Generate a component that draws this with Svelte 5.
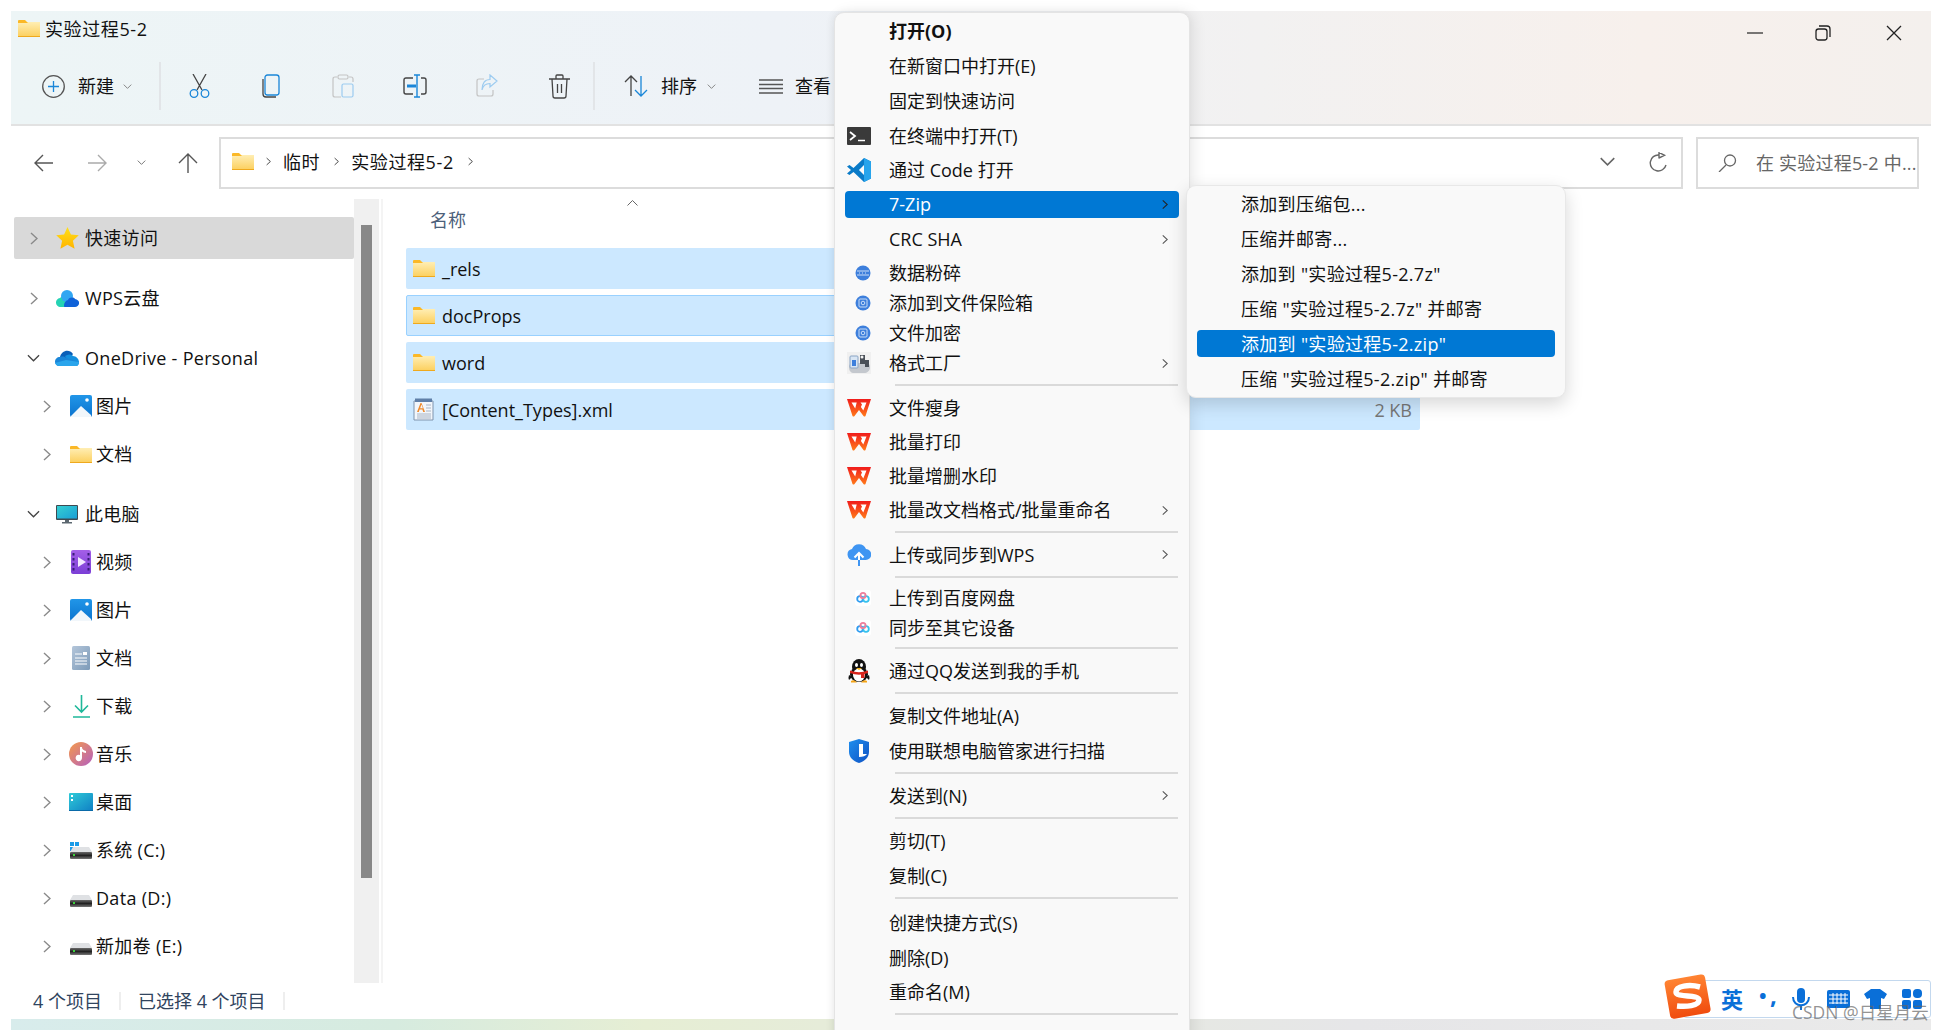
<script>
  const navTree = [
    { label: '快速访问', icon: 'star', active: true },
    { label: 'WPS云盘', icon: 'wpscloud', group: true },
    { label: 'OneDrive - Personal', icon: 'onedrive', open: true, group: true },
    { label: '图片', icon: 'pics', sub: true },
    { label: '文档', icon: 'folder', sub: true },
    { label: '此电脑', icon: 'monitor', open: true, group: true },
    { label: '视频', icon: 'video', sub: true },
    { label: '图片', icon: 'pics', sub: true },
    { label: '文档', icon: 'docs', sub: true },
    { label: '下载', icon: 'download', sub: true },
    { label: '音乐', icon: 'music', sub: true },
    { label: '桌面', icon: 'desktop', sub: true },
    { label: '系统 (C:)', icon: 'sysdrive', sub: true },
    { label: 'Data (D:)', icon: 'drive', sub: true },
    { label: '新加卷 (E:)', icon: 'drive', sub: true }
  ];

  const files = [
    { name: '_rels', icon: 'folder' },
    { name: 'docProps', icon: 'folder', focus: true },
    { name: 'word', icon: 'folder' },
    { name: '[Content_Types].xml', icon: 'xml', size: '2 KB' }
  ];

  const smallIcons = ['shred', 'vault', 'baidu'];

  const menu = [
    { t: '打开(O)', bold: true },
    { t: '在新窗口中打开(E)' },
    { t: '固定到快速访问' },
    { t: '在终端中打开(T)', icon: 'terminal' },
    { t: '通过 Code 打开', icon: 'vscode', size: 'h34' },
    { t: '7-Zip', more: true, on: true },
    { t: 'CRC SHA', more: true, size: 'crc' },
    { t: '数据粉碎', icon: 'shred', size: 'h30' },
    { t: '添加到文件保险箱', icon: 'vault', size: 'h30' },
    { t: '文件加密', icon: 'vault', size: 'h30' },
    { t: '格式工厂', icon: 'factory', more: true, size: 'h32' },
    { sep: true, extra: true },
    { t: '文件瘦身', icon: 'wps', size: 'h34' },
    { t: '批量打印', icon: 'wps', size: 'h34' },
    { t: '批量增删水印', icon: 'wps', size: 'h34' },
    { t: '批量改文档格式/批量重命名', icon: 'wps', more: true, size: 'h34' },
    { sep: true },
    { t: '上传或同步到WPS', icon: 'upload', more: true },
    { sep: true, extra: true },
    { t: '上传到百度网盘', icon: 'baidu', size: 'h30' },
    { t: '同步至其它设备', icon: 'baidu', size: 'h30' },
    { sep: true },
    { t: '通过QQ发送到我的手机', icon: 'qq' },
    { sep: true },
    { t: '复制文件地址(A)' },
    { t: '使用联想电脑管家进行扫描', icon: 'lenovo' },
    { sep: true },
    { t: '发送到(N)', more: true },
    { sep: true },
    { t: '剪切(T)' },
    { t: '复制(C)' },
    { sep: true, wide: true },
    { t: '创建快捷方式(S)' },
    { t: '删除(D)' },
    { t: '重命名(M)', size: 'h34' },
    { sep: true }
  ];

  const zipMenu = [
    { t: '添加到压缩包...' },
    { t: '压缩并邮寄...' },
    { t: '添加到 "实验过程5-2.7z"' },
    { t: '压缩 "实验过程5-2.7z" 并邮寄' },
    { t: '添加到 "实验过程5-2.zip"', on: true },
    { t: '压缩 "实验过程5-2.zip" 并邮寄' }
  ];
</script>

{#snippet chev(w = 8, h = 13, color = '#8a8a8a')}
  <svg class="chev" width={w} height={h} viewBox="0 0 8 13" fill="none" stroke={color} stroke-width="1.4"><path d="M1 1l6 5.5L1 12" /></svg>
{/snippet}

{#snippet down(w = 14, h = 8, color = '#444')}
  <svg width={w} height={h} viewBox="0 0 14 8" fill="none" stroke={color} stroke-width="1.4"><path d="M1 1l6 6 6-6" /></svg>
{/snippet}

{#snippet icon(name)}
  {#if name === 'folder'}
    <svg width="22" height="17" viewBox="0 0 22 17">
      <path d="M0 1q0-1 1-1h6l2 2h13v15H0z" fill="#fbb827" />
      <path d="M0 3h9l1-1h12v14H0z" fill="url(#fold)" />
      <rect y="16" width="22" height="1" fill="#efa91d" />
    </svg>
  {:else if name === 'star'}
    <svg width="23" height="23" viewBox="0 0 23 23"><path d="M11.5 0l3.4 7.4 7.9.9-5.9 5.4 1.7 8.1-7.1-4.1-7.1 4.1 1.7-8.1L.2 8.3l7.9-.9z" fill="url(#star)" /></svg>
  {:else if name === 'wpscloud'}
    <svg width="23" height="17" viewBox="0 0 23 17">
      <path d="M5 17a4.500 4.500 0 0 1-1-9 6 6 0 0 1 6-2h4v11z" fill="#25d3b4" />
      <circle cx="11" cy="6" r="6" fill="#31a6f2" />
      <path d="M9 17c-2 0-1-6 3-7 1-3 6-3 7-1 6 1 5 8 0 8z" fill="#0f62d8" />
    </svg>
  {:else if name === 'onedrive'}
    <svg width="24" height="16" viewBox="0 0 24 16">
      <path d="M5 7c1-6 9-9 13-3l-5 7z" fill="#0a5fb8" />
      <path d="M10 6c3-2 6-2 8 0 3 0 6 3 6 6l-9 2z" fill="#1490df" />
      <path d="M0 12c0-3 2-5 5-5 3-1 5 0 7 1l12 4c0 2-1 4-3 4H4c-2 0-4-2-4-4z" fill="#1a86d8" />
      <path d="M24 12c0 2-1 4-3 4H4c-2 0-3-1-4-3l11-3z" fill="#2aa5ec" />
    </svg>
  {:else if name === 'pics'}
    <svg width="22" height="22" viewBox="0 0 22 22">
      <rect width="22" height="22" rx="2" fill="url(#pic)" />
      <circle cx="17" cy="5" r="1.800" fill="#fff" />
      <path d="M1 21l10-10 10 9v2H1z" fill="#f2f7fb" />
    </svg>
  {:else if name === 'monitor'}
    <svg width="22" height="19" viewBox="0 0 22 19">
      <rect width="22" height="15" rx="1" fill="#3d4a52" />
      <rect x="1" y="1" width="20" height="12.500" fill="url(#screen)" />
      <rect x="9" y="15" width="4" height="2" fill="#5c6870" />
      <rect x="6" y="17" width="10" height="1.500" fill="#5c6870" />
    </svg>
  {:else if name === 'video'}
    <svg width="20" height="24" viewBox="0 0 20 24">
      <rect width="20" height="24" rx="2" fill="url(#vid)" />
      <path d="M7 7l8 5-8 5z" fill="#f2e8ff" />
      <path d="M1.500 3h2v2.500h-2zM1.500 8h2v2.500h-2zM1.500 13h2v2.500h-2zM1.500 18h2v2.500h-2zM16.500 3h2v2.500h-2zM16.500 8h2v2.500h-2zM16.500 13h2v2.500h-2zM16.500 18h2v2.500h-2z" fill="#3a1d78" />
    </svg>
  {:else if name === 'docs'}
    <svg width="18" height="24" viewBox="0 0 18 24">
      <rect width="18" height="24" rx="1.500" fill="url(#doc)" />
      <path d="M3 8h7M3 12h12M3 15h12M3 18h12" stroke="#fff" stroke-width="1" />
      <rect x="11" y="6" width="4" height="3" fill="#fff" />
    </svg>
  {:else if name === 'download'}
    <svg width="17" height="23" viewBox="0 0 17 23" fill="none" stroke="#1fb89a" stroke-width="1.600">
      <path d="M8.500 0v17M2 10.500l6.500 6.500 6.500-6.500M0 22h17" />
    </svg>
  {:else if name === 'music'}
    <svg width="24" height="24" viewBox="0 0 24 24">
      <circle cx="12" cy="12" r="12" fill="url(#mus)" />
      <path d="M11 5h2c0 3 2 3 4 4v2c-2 0-3-1-4-1.500V16a3.200 3.200 0 1 1-2-3z" fill="#fff" />
    </svg>
  {:else if name === 'desktop'}
    <svg width="24" height="18" viewBox="0 0 24 18">
      <rect width="24" height="18" rx="1" fill="url(#desk)" />
      <rect x="2" y="2" width="2" height="2" fill="#fff" />
      <rect x="2" y="6" width="2" height="2" fill="#fff" />
      <rect y="17" width="24" height="1" fill="#0a6aa8" />
    </svg>
  {:else if name === 'sysdrive' || name === 'drive'}
    <svg width="22" height="17" viewBox="0 0 22 17">
      {#if name === 'sysdrive'}
        <path d="M0 0h4v4H0zM5 0h4v4H5zM0 5h4v4H0zM5 5h4v4H5z" fill="#1a9be8" />
      {/if}
      <path d="M3 5h16l3 5H0z" fill="#dfe1e4" />
      <rect y="10" width="22" height="7" rx="1" fill="url(#drv)" />
      <rect x="3" y="12" width="2" height="2" fill="#3bd13b" />
    </svg>
  {:else if name === 'xml'}
    <svg width="22" height="24" viewBox="0 0 22 24">
      <path d="M1 22V3h19v19z" fill="#f2f6fb" stroke="#7f93ad" />
      <rect x="2" y="0.500" width="17" height="3.500" fill="#5f7fa8" />
      <path d="M4 14l3.500-9h1l3.500 9h-1.800l-.8-2.400H6.600L5.800 14zM7.100 10.200h2.800L8.500 6.500z" fill="#ef8a2c" />
      <path d="M13 7h5M13 10h5M13 13h5M4 16h14M4 18h14M4 20h14" stroke="#a9b4c4" stroke-width="1" />
    </svg>
  {:else if name === 'terminal'}
    <svg width="24" height="18" viewBox="0 0 24 18">
      <rect width="24" height="18" rx="1" fill="#3a3a3a" />
      <path d="M3 5l5 4-5 4" fill="none" stroke="#fff" stroke-width="1.800" />
      <path d="M11 13.500h7" stroke="#fff" stroke-width="1.500" />
    </svg>
  {:else if name === 'vscode'}
    <svg width="24" height="24" viewBox="0 0 24 24">
      <path d="M17 0l7 3.500v17L17 24 6.500 14 2.500 17 0 15.500 4 12 0 8.500 2.500 7l4 3z" fill="#0a7bc8" />
      <path d="M17 0l7 3.500v17L17 24V16l-5-4 5-4z" fill="#27a4ec" />
      <path d="M17 7L12 12l5 5V7z" fill="#fafafa" />
    </svg>
  {:else if name === 'shred' || name === 'vault'}
    <svg width="16" height="16" viewBox="0 0 16 16">
      <circle cx="8" cy="8" r="7.500" fill="#3d7fdc" />
      {#if name === 'shred'}
        <path d="M2 6h12M2 10h12M4 8h1M7 8h1M10 8h1" stroke="#c9def8" stroke-width="1.200" fill="none" />
      {:else}
        <rect x="4" y="4" width="8" height="8" rx="1" fill="none" stroke="#c9def8" stroke-width="1" />
        <circle cx="8" cy="8" r="1.800" fill="none" stroke="#c9def8" />
      {/if}
    </svg>
  {:else if name === 'factory'}
    <svg width="24" height="22" viewBox="0 0 24 22">
      <rect width="24" height="22" fill="#f0f0f0" />
      <path d="M2 15c0-3 2-4 4-4h14c2 0 3 2 3 4 0 4-3 6-6 6H7c-3 0-5-2-5-6z" fill="#c4c8ce" />
      <rect x="3" y="4" width="8" height="12" rx="1" fill="#d9e6f4" stroke="#8aa4c4" />
      <rect x="5" y="8" width="4" height="6" fill="#3d7fdc" />
      <path d="M13 3h5v5h4v7h-4v-3h-5z" fill="#4a5058" />
      <circle cx="15" cy="5" r="1.500" fill="#f4f4f4" />
    </svg>
  {:else if name === 'wps'}
    <svg width="24" height="18" viewBox="0 0 24 18">
      <path d="M0 0h24l-5.500 17q-1 1-2 0L12 11l-4.500 6q-1 1-2 0z" fill="url(#wps)" />
      <path d="M4.500 3.500h5.200l-1.500 6zM13.500 3.500h6l-3.200 8-2.400-3.500 1.100-2.500z" fill="#fff" />
    </svg>
  {:else if name === 'upload'}
    <svg width="24" height="23" viewBox="0 0 24 23">
      <path d="M6 17a5.500 5.500 0 0 1-1-10.900A7.500 7.500 0 0 1 19 6a5.500 5.500 0 0 1-.5 11z" fill="#3f95f2" />
      <path d="M12 17V10M7.500 14.500L12 10l4.500 4.500" fill="none" stroke="#fff" stroke-width="2" />
      <path d="M12 17v6" stroke="#3f95f2" stroke-width="2" />
    </svg>
  {:else if name === 'baidu'}
    <svg width="16" height="16" viewBox="0 0 16 16" fill="none" stroke-width="1.800">
      <rect width="16" height="16" rx="3" fill="#fff" stroke="none" />
      <circle cx="5" cy="9" r="2.800" stroke="#2f9cf0" />
      <circle cx="11" cy="9" r="2.800" stroke="#35c2ee" />
      <circle cx="8" cy="5.500" r="2.600" stroke="#ee7f9c" />
    </svg>
  {:else if name === 'qq'}
    <svg width="22" height="24" viewBox="0 0 22 24">
      <ellipse cx="11" cy="8" rx="7" ry="8" fill="#111" />
      <ellipse cx="11" cy="15.500" rx="9" ry="7.500" fill="#111" />
      <path d="M1 16q-1 3 0 5l3-3zM21 16q1 3 0 5l-3-3z" fill="#111" />
      <ellipse cx="11" cy="16" rx="6" ry="6.500" fill="#fff" />
      <ellipse cx="8.500" cy="6" rx="1.500" ry="2" fill="#fff" />
      <ellipse cx="13.500" cy="6" rx="1.500" ry="2" fill="#fff" />
      <path d="M8 9h6l-3 2z" fill="#f5b317" />
      <path d="M2 11.500q9 3.500 18 0v2.500q-9 3.500-18 0z" fill="#d8231c" />
      <rect x="13" y="14" width="3.500" height="5" fill="#d8231c" />
      <path d="M3 22q3-2 6 1.500H3zM13 23.500q3-3.500 6-1.500v1.500z" fill="#f5a517" />
    </svg>
  {:else if name === 'lenovo'}
    <svg width="22" height="24" viewBox="0 0 22 24">
      <path d="M11 0l10 3v10c0 5-4 9-10 11C5 22 1 18 1 13V3z" fill="url(#len)" />
      <path d="M11 5h4v10h4q-2 3-8 3z" fill="#fff" />
    </svg>
  {/if}
{/snippet}

<svg class="defs" width="0" height="0" aria-hidden="true">
  <defs>
    <linearGradient id="fold" x1="0" y1="0" x2="0" y2="1"><stop offset="0" stop-color="#ffeeb4" /><stop offset="1" stop-color="#fcd162" /></linearGradient>
    <linearGradient id="star" x1="0" y1="0" x2="0" y2="1"><stop offset="0" stop-color="#ffe01a" /><stop offset="1" stop-color="#ffb400" /></linearGradient>
    <linearGradient id="pic" x1="0" y1="0" x2="0" y2="1"><stop offset="0" stop-color="#2196e8" /><stop offset="1" stop-color="#0c74cf" /></linearGradient>
    <linearGradient id="screen" x1="0" y1="0" x2="1" y2="1"><stop offset="0" stop-color="#35cfd2" /><stop offset="1" stop-color="#1a9fd6" /></linearGradient>
    <linearGradient id="vid" x1="0" y1="0" x2="0" y2="1"><stop offset="0" stop-color="#a45fe8" /><stop offset="1" stop-color="#7b3ed6" /></linearGradient>
    <linearGradient id="doc" x1="0" y1="0" x2="1" y2="1"><stop offset="0" stop-color="#b4c6da" /><stop offset="1" stop-color="#7c9ab8" /></linearGradient>
    <linearGradient id="mus" x1="0" y1="0" x2="1" y2="1"><stop offset="0" stop-color="#f59a4a" /><stop offset="1" stop-color="#b45fc0" /></linearGradient>
    <linearGradient id="desk" x1="0" y1="0" x2="1" y2="1"><stop offset="0" stop-color="#2fcbd8" /><stop offset="1" stop-color="#0f7fc4" /></linearGradient>
    <linearGradient id="drv" x1="0" y1="0" x2="0" y2="1"><stop offset="0" stop-color="#6a6a6a" /><stop offset=".5" stop-color="#222" /><stop offset="1" stop-color="#777" /></linearGradient>
    <linearGradient id="wps" x1="0" y1="0" x2="0" y2="1"><stop offset="0" stop-color="#f01c1c" /><stop offset="1" stop-color="#ff7a1a" /></linearGradient>
    <linearGradient id="sog" x1="0" y1="0" x2="0" y2="1"><stop offset="0" stop-color="#ff8433" /><stop offset="1" stop-color="#f04c0e" /></linearGradient>
    <linearGradient id="len" x1="0" y1="0" x2="1" y2="1"><stop offset="0" stop-color="#1f8fee" /><stop offset="1" stop-color="#0f52c4" /></linearGradient>
  </defs>
</svg>

<div class="page">
  <div class="window">
    <header class="head">
      <div class="titlebar">
        <div class="title">
          {@render icon('folder')}
          <span>实验过程5-2</span>
        </div>
        <div class="winctl">
          <svg width="16" height="2" viewBox="0 0 16 2"><path d="M0 1h16" stroke="#222" stroke-width="1.200" /></svg>
          <svg width="16" height="16" viewBox="0 0 16 16" fill="none" stroke="#222" stroke-width="1.300"><rect x="1" y="4" width="11" height="11" rx="2.500" /><path d="M4 1h8q3 0 3 3v8" /></svg>
          <svg class="x" width="16" height="16" viewBox="0 0 16 16" fill="none" stroke="#222" stroke-width="1.300"><path d="M1 1l14 14M15 1L1 15" /></svg>
        </div>
      </div>
      <div class="toolbar">
        <div class="tbtn new">
          <svg width="23" height="23" viewBox="0 0 23 23" fill="none"><circle cx="11.500" cy="11.500" r="10.800" stroke="#555" stroke-width="1.300" /><path d="M11.500 6v11M6 11.500h11" stroke="#1a86d8" stroke-width="1.300" /></svg>
          <span>新建</span>
          {@render down(9, 5, '#777')}
        </div>
        <i class="vsep"></i>
        <div class="ico">
          <svg width="21" height="24" viewBox="0 0 21 24" fill="none" stroke-width="1.300"><path d="M4 0l9 16M17 0L8 16" stroke="#444" /><circle cx="5" cy="19.500" r="3.800" stroke="#1a86d8" /><circle cx="16" cy="19.500" r="3.800" stroke="#1a86d8" /></svg>
        </div>
        <div class="ico">
          <svg width="18" height="24" viewBox="0 0 18 24" fill="none" stroke-width="1.300"><rect x="3" y="1" width="14" height="20" rx="2.500" stroke="#1a86d8" /><path d="M1 5v15q0 3 3 3h10" stroke="#444" /></svg>
        </div>
        <div class="ico">
          <svg width="22" height="24" viewBox="0 0 22 24" fill="none" stroke-width="1.200"><path d="M5 3H3Q1 3 1 5v16q0 2 2 2h6M17 3h2q2 0 2 2v3" stroke="#c4c4c4" /><rect x="6" y="1" width="10" height="4" rx="1.500" stroke="#c4c4c4" /><rect x="10" y="10" width="11" height="13" rx="1.500" stroke="#9ccbf0" /></svg>
        </div>
        <div class="ico">
          <svg width="24" height="24" viewBox="0 0 24 24" fill="none" stroke-width="1.400"><path d="M10 4H3Q1 4 1 6v12q0 2 2 2h7M18 4h3q2 0 2 2v12q0 2-2 2h-3" stroke="#444" /><rect x="4" y="10.500" width="9" height="3" fill="#1a86d8" /><path d="M14 1v22M11 1h6M11 23h6" stroke="#1a86d8" /></svg>
        </div>
        <div class="ico">
          <svg width="22" height="24" viewBox="0 0 22 24" fill="none" stroke-width="1.200"><path d="M8 5H3Q1 5 1 7v13q0 2 2 2h12q2 0 2-2v-4" stroke="#c4c4c4" /><path d="M14 1l7 6-7 6V9.500C10 9.500 7 11 6 16c0-7 3-10.500 8-10.500z" stroke="#9ccbf0" /></svg>
        </div>
        <div class="ico">
          <svg width="21" height="25" viewBox="0 0 21 25" fill="none" stroke="#444" stroke-width="1.300"><path d="M0 5h21M7 5V2q0-1 1-1h5q1 0 1 1v3M3 5l1 17q0 2 2 2h9q2 0 2-2l1-17M8.500 10v9M12.500 10v9" /></svg>
        </div>
        <i class="vsep"></i>
        <div class="tbtn sort">
          <svg width="24" height="22" viewBox="0 0 24 22" fill="none" stroke-width="1.300"><path d="M7 21V1M1 7l6-6 6 6" stroke="#444" /><path d="M17 1v20M11 15l6 6 6-6" stroke="#1a86d8" /></svg>
          <span>排序</span>
          {@render down(9, 5, '#777')}
        </div>
        <div class="tbtn view">
          <svg width="24" height="15" viewBox="0 0 24 15" fill="none" stroke="#555" stroke-width="1.300"><path d="M0 1h24M0 5.500h24M0 9.500h24M0 14h24" /></svg>
          <span>查看</span>
        </div>
      </div>
    </header>

    <nav class="navbar">
      <div class="navbtns">
        <svg width="19" height="18" viewBox="0 0 19 18" fill="none" stroke="#555" stroke-width="1.400"><path d="M19 9H1M9 1L1 9l8 8" /></svg>
        <svg width="19" height="18" viewBox="0 0 19 18" fill="none" stroke="#aaa" stroke-width="1.400"><path d="M0 9h18M10 1l8 8-8 8" /></svg>
        {@render down(9, 5, '#666')}
        <svg width="20" height="20" viewBox="0 0 20 20" fill="none" stroke="#555" stroke-width="1.400"><path d="M10 20V1M1 10l9-9 9 9" /></svg>
      </div>
      <div class="addr">
        <div class="crumbs">
          {@render icon('folder')}
          {@render chev(5, 9, '#333')}
          <span>临时</span>
          {@render chev(5, 9, '#333')}
          <span>实验过程5-2</span>
          {@render chev(5, 9, '#333')}
        </div>
        <div class="addr-end">
          {@render down(17, 9, '#666')}
          <svg width="19" height="20" viewBox="0 0 19 20" fill="none" stroke="#666" stroke-width="1.400"><path d="M17 13A8 8 0 1 1 10 3M10 0v6.500M10 .5l5.500 2.800L10 6" /></svg>
        </div>
      </div>
      <div class="search">
        <svg width="19" height="18" viewBox="0 0 19 18" fill="none" stroke="#666" stroke-width="1.300"><circle cx="12" cy="6.500" r="5.500" /><path d="M8 11L1 18" /></svg>
        <span>在 实验过程5-2 中...</span>
      </div>
    </nav>

    <main class="main">
      <aside class="side">
        <ul class="tree">
          {#each navTree as node}
            <li class="node" class:active={node.active} class:group={node.group} class:sub={node.sub}>
              <span class="tw">
                {#if node.open}
                  {@render down(13, 8, '#444')}
                {:else}
                  {@render chev(8, 13, '#8a8a8a')}
                {/if}
              </span>
              <span class="ni">{@render icon(node.icon)}</span>
              <span class="nl">{node.label}</span>
            </li>
          {/each}
        </ul>
        <div class="track"><div class="thumb"></div></div>
      </aside>

      <section class="list">
        <div class="colhead">
          <span>名称</span>
          <svg class="caret" width="11" height="6" viewBox="0 0 11 6" fill="none" stroke="#666"><path d="M.5 5.500l5-5 5 5" /></svg>
        </div>
        {#each files as f}
          <div class="file" class:focus={f.focus}>
            <span class="fi">{@render icon(f.icon)}</span>
            <span class="fname">{f.name}</span>
            {#if f.size}<span class="fsize">{f.size}</span>{/if}
          </div>
        {/each}
      </section>
    </main>

    <footer class="status">
      <span>4 个项目</span>
      <i></i>
      <span>已选择 4 个项目</span>
      <i></i>
    </footer>
  </div>
  <div class="strip"></div>

  <div class="menu">
    {#each menu as m}
      {#if m.sep}
        <div class="msep" class:wide={m.wide} class:extra={m.extra}></div>
      {:else}
        <div class="mi {m.size ?? ''}" class:on={m.on} class:bold={m.bold}>
          {#if m.icon}<span class="mico" class:small={smallIcons.includes(m.icon)}>{@render icon(m.icon)}</span>{/if}
          <span>{m.t}</span>
          {#if m.more}<span class="marrow">{@render chev(6, 11, m.on ? '#222' : '#555')}</span>{/if}
        </div>
      {/if}
    {/each}
  </div>

  <div class="submenu">
    {#each zipMenu as z}
      <div class="si" class:on={z.on}>{z.t}</div>
    {/each}
  </div>

  <div class="ime">
    <svg class="sogou" width="50" height="47" viewBox="0 0 50 47">
      <rect x="4" y="4" width="41" height="39" rx="4" fill="url(#sog)" transform="rotate(-10 25 23)" />
      <path d="M37 14C26 11 13 13 13 19c0 6 23 2 23 8 0 6-13 7-22 6" fill="none" stroke="#fff" stroke-width="5.500" />
    </svg>
    <span class="ime-zh">英</span>
    <span class="ime-dot">•</span>
    <span class="ime-comma">,</span>
    <svg width="18" height="23" viewBox="0 0 18 23" fill="#0a6fd8"><rect x="5" y="0" width="8" height="15" rx="4" /><path d="M1 9c0 11 16 11 16 0" fill="none" stroke="#0a6fd8" stroke-width="2" /><rect x="8" y="17" width="2" height="5" /></svg>
    <svg width="23" height="18" viewBox="0 0 23 18"><rect width="23" height="18" rx="2" fill="#0a6fd8" /><path d="M2 5h19M2 9h19M2 13h19M6 3v11M10 3v11M14 3v11M18 3v11" stroke="#fff" stroke-width="1" /></svg>
    <svg width="23" height="20" viewBox="0 0 23 20"><path d="M7 0h9l7 5-3 5-3-1v11H6V9l-3 1L0 5z" fill="#0a6fd8" /></svg>
    <svg width="20" height="20" viewBox="0 0 20 20" fill="#0a6fd8"><rect width="9" height="9" rx="2" /><rect x="11" width="9" height="9" rx="4" /><rect y="11" width="9" height="9" rx="2" /><rect x="11" y="11" width="9" height="9" rx="2" /></svg>
  </div>
  <div class="mark">CSDN @日星月云</div>
</div>

<style>
  :global(body) {
    margin: 0;
    background: #fff;
  }
  .defs {
    position: absolute;
  }
  .page {
    position: relative;
    width: 1942px;
    height: 1030px;
    padding: 11px 11px 0;
    box-sizing: border-box;
    overflow: hidden;
    background: #fff;
    color: #111;
    font-family: "Open Sans", "Noto Sans CJK SC", sans-serif;
    font-size: 18px;
    line-height: 24px;
    display: flex;
    flex-direction: column;
  }
  svg {
    display: block;
    flex: none;
  }
  i {
    display: block;
  }

  .window {
    height: 1008px;
    flex: none;
    display: flex;
    flex-direction: column;
  }
  .head {
    height: 113px;
    border-bottom: 2px solid #e2e2e2;
    background: linear-gradient(90deg, #edf5f6 0%, #eef2f7 40%, #f2f1f1 65%, #f7f0ec 85%, #f4f0ed 100%);
    flex: none;
  }
  .titlebar {
    height: 40px;
    display: flex;
    justify-content: space-between;
    align-items: center;
    padding-left: 7px;
    padding-right: 29px;
    box-sizing: border-box;
  }
  .title {
    display: flex;
    align-items: center;
    gap: 5px;
    margin-top: -5px;
    letter-spacing: 0.6px;
  }
  .winctl {
    display: flex;
    align-items: center;
    gap: 52px;
    margin-top: 3px;
  }
  .winctl .x {
    margin-left: 3px;
  }
  .toolbar {
    height: 48px;
    margin-top: 11px;
    display: flex;
    align-items: center;
    padding-left: 31px;
    font-size: 18px;
  }
  .tbtn {
    display: flex;
    align-items: center;
  }
  .new {
    width: 117px;
  }
  .new span {
    margin-left: 13px;
    margin-right: 9px;
  }
  .vsep {
    width: 2px;
    height: 48px;
    background: #e2e5e8;
  }
  .ico {
    width: 72px;
    box-sizing: border-box;
    padding-left: 4px;
    display: flex;
    justify-content: center;
  }
  .ico:first-of-type {
    margin-left: 2px;
  }
  .sort {
    margin-left: 29px;
  }
  .sort span {
    margin-left: 13px;
    margin-right: 10px;
  }
  .view {
    margin-left: 43px;
    gap: 12px;
  }

  .navbar {
    height: 73px;
    flex: none;
    display: flex;
    align-items: center;
    padding-right: 12px;
    box-sizing: border-box;
  }
  .navbtns {
    width: 208px;
    flex: none;
    display: flex;
    align-items: center;
    padding-left: 23px;
    box-sizing: border-box;
  }
  .navbtns svg:nth-child(2) {
    margin-left: 35px;
  }
  .navbtns svg:nth-child(3) {
    margin-left: 30px;
  }
  .navbtns svg:nth-child(4) {
    margin-left: 32px;
  }
  .addr {
    flex: 1;
    height: 52px;
    box-sizing: border-box;
    border: 2px solid #dcdcdc;
    display: flex;
    align-items: center;
    justify-content: space-between;
    padding: 0 13px 0 11px;
  }
  .crumbs {
    display: flex;
    align-items: center;
    gap: 14px;
    letter-spacing: 0.6px;
    margin-top: -2px;
  }
  .crumbs > svg:first-child {
    margin-right: -2px;
  }
  .crumbs .chev {
    margin-right: -2px;
  }
  .addr-end {
    display: flex;
    align-items: center;
    gap: 33px;
    margin-top: -2px;
  }
  .search {
    width: 223px;
    height: 52px;
    flex: none;
    margin-left: 13px;
    box-sizing: border-box;
    border: 2px solid #dcdcdc;
    display: flex;
    align-items: center;
    padding-left: 20px;
    gap: 19px;
    color: #666;
    white-space: nowrap;
    overflow: hidden;
    letter-spacing: 0.2px;
  }

  .main {
    flex: 1;
    min-height: 0;
    display: flex;
  }
  .side {
    width: 372px;
    flex: none;
    display: flex;
    box-sizing: border-box;
    border-right: 2px solid #f4f4f4;
    margin-right: 0;
  }
  .tree {
    list-style: none;
    margin: 0;
    padding: 18px 0 0 3px;
    width: 343px;
    box-sizing: border-box;
  }
  .node {
    height: 42px;
    margin-bottom: 6px;
    display: flex;
    align-items: center;
    border-radius: 2px;
    white-space: nowrap;
  }
  .node.active {
    background: #d9d9d9;
  }
  .node.group {
    margin-top: 18px;
  }
  .tw {
    width: 13px;
    margin-left: 13px;
    display: flex;
    justify-content: center;
  }
  .ni {
    width: 26px;
    margin-left: 14px;
    margin-right: 5px;
    display: flex;
    justify-content: center;
  }
  .sub .tw {
    margin-left: 26px;
  }
  .sub .ni {
    margin-left: 15px;
    margin-right: 2px;
  }
  .nl {
    letter-spacing: 0.3px;
  }
  .track {
    width: 25px;
    flex: none;
    background: #f0f0f0;
    padding: 26px 7px 0;
    box-sizing: border-box;
  }
  .thumb {
    width: 11px;
    height: 653px;
    background: #888;
  }

  .list {
    flex: 1;
    padding-left: 23px;
  }
  .colhead {
    position: relative;
    width: 1014px;
    height: 49px;
    box-sizing: border-box;
    padding: 9px 0 0 24px;
    color: #4c607a;
  }
  .caret {
    position: absolute;
    left: 221px;
    top: 1px;
  }
  .file {
    width: 1014px;
    height: 41px;
    margin-bottom: 6px;
    box-sizing: border-box;
    background: #cce8ff;
    border-radius: 2px;
    display: flex;
    align-items: center;
    padding-left: 7px;
    padding-right: 8px;
  }
  .file.focus {
    border: 1px solid #99d1ff;
    padding-left: 6px;
  }
  .fi {
    width: 22px;
    display: flex;
    justify-content: center;
    margin-right: 7px;
  }
  .fname {
    flex: 1;
  }
  .fsize {
    color: #777;
  }

  .status {
    height: 36px;
    flex: none;
    display: flex;
    align-items: center;
    padding-left: 22px;
    color: #30445e;
  }
  .status i {
    width: 2px;
    height: 18px;
    background: #eeeeee;
    margin: 0 17px;
  }
  .strip {
    height: 11px;
    flex: none;
    background: linear-gradient(90deg, #d8ecec 0%, #d6ebdf 20%, #e6eed4 33%, #e6e6e8 70%, #eaeaea 100%);
  }

  .menu {
    position: absolute;
    left: 834px;
    top: 12px;
    width: 356px;
    height: 1040px;
    box-sizing: border-box;
    padding: 0 10px;
    background: #f9f9f9;
    border: 1px solid #e4e4e4;
    border-radius: 10px;
    box-shadow: 4px 0 14px rgba(0, 0, 0, 0.08), -2px 0 8px rgba(0, 0, 0, 0.05);
  }
  .mi {
    position: relative;
    height: 35px;
    display: flex;
    align-items: center;
    padding-left: 44px;
    white-space: nowrap;
  }
  .mi.h34 {
    height: 34px;
  }
  .mi.h32 {
    height: 30px;
    padding-bottom: 2px;
  }
  .mi.h30 {
    height: 30px;
  }
  .mi.crc {
    height: 36px;
    margin-bottom: 1px;
  }
  .mi.bold {
    font-weight: 700;
  }
  .mi.on {
    height: 26px;
    padding-bottom: 1px;
    margin: 4px 0 3px;
    border-radius: 4px;
    background: #0078d4;
    color: #fff;
  }
  .mico {
    position: absolute;
    left: 0;
    width: 28px;
    display: flex;
    justify-content: center;
  }
  .mico.small {
    width: 36px;
  }
  .marrow {
    position: absolute;
    right: 11px;
  }
  .msep {
    height: 2px;
    margin: 4px 1px 4px 50px;
    background: #dadada;
  }
  .msep.extra {
    margin-bottom: 5px;
  }
  .msep.wide {
    margin-bottom: 6px;
  }

  .submenu {
    position: absolute;
    left: 1186px;
    top: 185px;
    width: 380px;
    height: 213px;
    box-sizing: border-box;
    padding: 5px 10px;
    background: #f9f9f9;
    border: 1px solid #e8e8e8;
    border-radius: 10px;
    box-shadow: 0 6px 18px rgba(0, 0, 0, 0.16);
    display: flex;
    flex-direction: column;
    gap: 8px;
  }
  .si {
    height: 27px;
    display: flex;
    align-items: center;
    padding-left: 44px;
    border-radius: 4px;
    white-space: nowrap;
    letter-spacing: 0.3px;
  }
  .si.on {
    background: #0078d4;
    color: #fff;
  }

  .ime {
    position: absolute;
    left: 1683px;
    top: 980px;
    width: 248px;
    height: 38px;
    box-sizing: border-box;
    background: #fff;
    border: 1px solid #c3d8ee;
    border-radius: 3px;
    display: flex;
    align-items: center;
    padding-left: 37px;
    color: #0a6fd8;
  }
  .sogou {
    position: absolute;
    left: -21px;
    top: -8px;
  }
  .ime-zh {
    font-size: 22px;
    font-weight: 700;
    width: 28px;
  }
  .ime-dot {
    margin-left: 10px;
    width: 11px;
    margin-top: -7px;
    font-size: 20px;
    font-weight: 700;
  }
  .ime-comma {
    width: 25px;
    font-size: 24px;
    font-weight: 700;
    margin-top: -8px;
  }
  .ime svg:nth-of-type(2) {
    margin-right: 17px;
    margin-left: -3px;
  }
  .ime svg:nth-of-type(3) {
    margin-right: 14px;
  }
  .ime svg:nth-of-type(4) {
    margin-right: 15px;
  }
  .mark {
    position: absolute;
    left: 1792px;
    top: 1000px;
    color: rgba(100, 100, 100, 0.7);
    font-size: 17.500px;
    white-space: nowrap;
  }
</style>
